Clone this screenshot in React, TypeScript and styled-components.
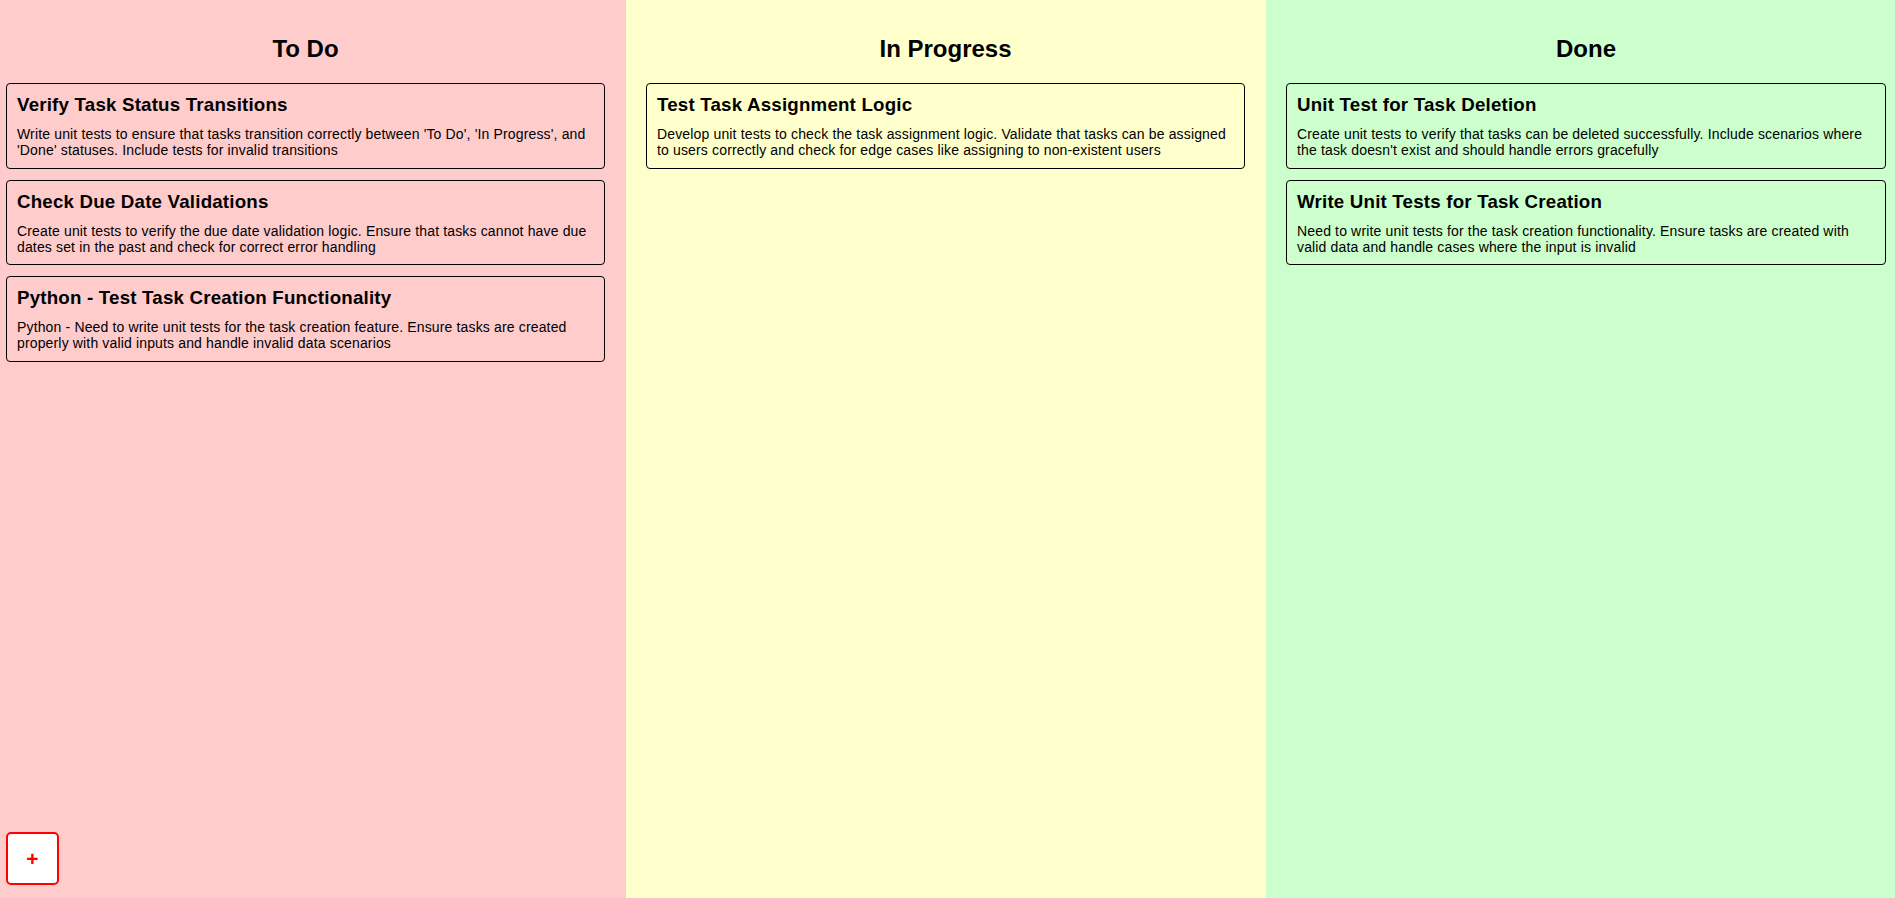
import styled, { createGlobalStyle } from 'styled-components'
import React from 'react'

const GlobalStyle = createGlobalStyle`
  html, body {
    margin: 0;
    padding: 0;
  }
  body {
    font-family: "Liberation Sans", Arial, sans-serif;
    color: #000;
  }
`

type Task = { title: string; description: string }

type ColumnData = {
  name: string
  color: string
  padLeft: number
  padRight: number
  tasks: Task[]
}

const columns: ColumnData[] = [
  {
    name: 'To Do',
    color: '#ffcccc',
    padLeft: 6,
    padRight: 21,
    tasks: [
      {
        title: 'Verify Task Status Transitions',
        description:
          "Write unit tests to ensure that tasks transition correctly between 'To Do', 'In Progress', and 'Done' statuses. Include tests for invalid transitions",
      },
      {
        title: 'Check Due Date Validations',
        description:
          'Create unit tests to verify the due date validation logic. Ensure that tasks cannot have due dates set in the past and check for correct error handling',
      },
      {
        title: 'Python - Test Task Creation Functionality',
        description:
          'Python - Need to write unit tests for the task creation feature. Ensure tasks are created properly with valid inputs and handle invalid data scenarios',
      },
    ],
  },
  {
    name: 'In Progress',
    color: '#ffffcc',
    padLeft: 20,
    padRight: 21,
    tasks: [
      {
        title: 'Test Task Assignment Logic',
        description:
          'Develop unit tests to check the task assignment logic. Validate that tasks can be assigned to users correctly and check for edge cases like assigning to non-existent users',
      },
    ],
  },
  {
    name: 'Done',
    color: '#ccffcc',
    padLeft: 20,
    padRight: 9,
    tasks: [
      {
        title: 'Unit Test for Task Deletion',
        description:
          "Create unit tests to verify that tasks can be deleted successfully. Include scenarios where the task doesn't exist and should handle errors gracefully",
      },
      {
        title: 'Write Unit Tests for Task Creation',
        description:
          'Need to write unit tests for the task creation functionality. Ensure tasks are created with valid data and handle cases where the input is invalid',
      },
    ],
  },
]

const Board = styled.div`
  display: grid;
  grid-template-columns: 626px 640px 1fr;
  min-height: 100vh;
`

const Column = styled.section<{ $bg: string; $padLeft: number; $padRight: number }>`
  background: ${(p) => p.$bg};
  padding: 15px ${(p) => p.$padRight}px 20px ${(p) => p.$padLeft}px;
  display: flex;
  flex-direction: column;
`

const ColumnTitle = styled.h2`
  font-size: 24px;
  font-weight: bold;
  text-align: center;
  margin: 20px 0 20px;
`

const CardList = styled.div`
  display: flex;
  flex-direction: column;
  gap: 11px;
`

const Card = styled.div`
  border: 1px solid #000;
  border-radius: 4px;
  padding: 10px 10px 9.5px;
`

const CardTitle = styled.h3`
  font-size: 18.72px;
  font-weight: bold;
  letter-spacing: 0.2px;
  margin: 0 0 10px;
`

const CardText = styled.p`
  font-size: 14px;
  letter-spacing: 0.15px;
  margin: 0;
`

const AddButton = styled.button`
  position: fixed;
  left: 6px;
  bottom: 13px;
  width: 53px;
  height: 53px;
  background: #fff;
  border: 2px solid #ff0000;
  border-radius: 5px;
  color: #ff0000;
  font-family: "Liberation Sans", Arial, sans-serif;
  font-size: 21px;
  font-weight: bold;
  line-height: 1;
  padding: 0;
  display: flex;
  align-items: center;
  justify-content: center;
  cursor: pointer;
`

const App: React.FC = () => {
  return (
    <>
      <GlobalStyle />
      <Board>
        {columns.map((col) => (
          <Column key={col.name} $bg={col.color} $padLeft={col.padLeft} $padRight={col.padRight}>
            <ColumnTitle>{col.name}</ColumnTitle>
            <CardList>
              {col.tasks.map((t) => (
                <Card key={t.title}>
                  <CardTitle>{t.title}</CardTitle>
                  <CardText>{t.description}</CardText>
                </Card>
              ))}
            </CardList>
          </Column>
        ))}
      </Board>
      <AddButton>+</AddButton>
    </>
  )
}

export default App
